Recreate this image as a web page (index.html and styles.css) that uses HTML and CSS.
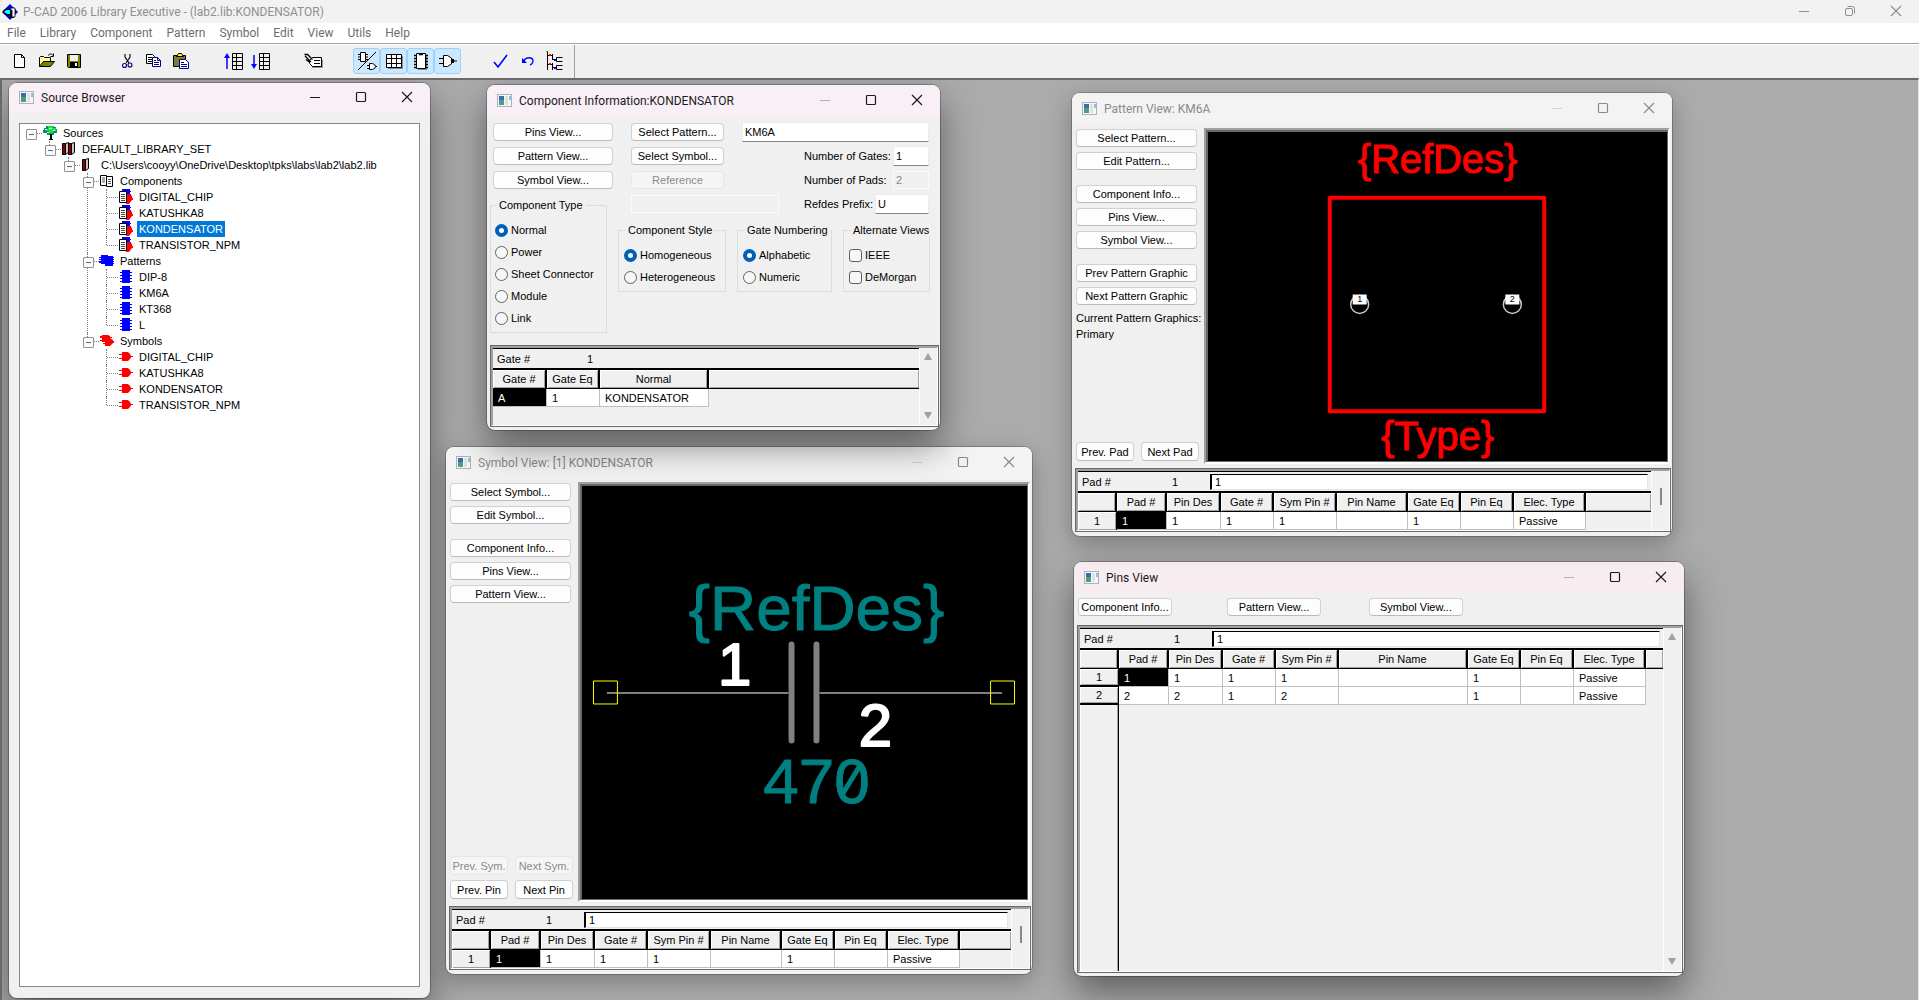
FILE: index.html
```html
<!DOCTYPE html>
<html lang="en">
<head>
<meta charset="utf-8">
<title>P-CAD 2006 Library Executive - (lab2.lib:KONDENSATOR)</title>
<link rel="stylesheet" href="styles.css">
</head>
<body>
<svg class="defs" aria-hidden="true">
  <symbol id="i-min" viewBox="0 0 12 12"><path d="M1 6.5h10" fill="none" stroke="currentColor"/></symbol>
  <symbol id="i-max" viewBox="0 0 12 12"><rect x="1.5" y="1.5" width="9" height="9" rx="1" fill="none" stroke="currentColor" stroke-width="1.2"/></symbol>
  <symbol id="i-restore" viewBox="0 0 12 12"><rect x="1.5" y="3.500" width="7" height="7" rx="1.500" fill="none" stroke="currentColor"/><path d="M3.500 1.500h5a2 2 0 0 1 2 2v5" fill="none" stroke="currentColor"/></symbol>
  <symbol id="i-close" viewBox="0 0 12 12"><path d="M1 1l10 10M11 1L1 11" fill="none" stroke="currentColor" stroke-width="1.200"/></symbol>
  <symbol id="i-app" viewBox="0 0 16 14"><rect x=".5" y=".5" width="14" height="12" fill="#f4f6f7" stroke="#a9b4ba"/><rect x="2" y="2" width="5" height="5" fill="#3a6ea5"/><rect x="2" y="6" width="5" height="5" fill="#4f9c83"/><rect x="8" y="2" width="3" height="9" fill="#dfe3de"/><rect x="12" y="2" width="2" height="4" fill="#8dc0dd"/></symbol>
  <symbol id="t-tree" viewBox="0 0 16 16"><path d="M4 1h8v1h2v2h1v4h-3v2H5V8H1V5h1V3h2z" fill="#0a8a7a"/><path d="M6 1h5v2h3v3h-3v2H7V6H4V4h2z" fill="#19e23a"/><path d="M3 4h2v1H3zM7 3h3v1H7zM5 7h2v1H5zM11 5h2v1h-2z" fill="#d8fbe0"/><path d="M8 9h2v6H8zM7 14h4v1H7z" fill="#000"/></symbol>
  <symbol id="t-books" viewBox="0 0 16 16"><path d="M1.500 2.500h3v11h-3zM7.500 2.500h3v11h-3z" fill="#8b0000" stroke="#000"/><path d="M4.500 2.500l3-1v10l-3 2zM10.500 2.500l3-1v10l-3 2z" fill="#c8c8c8" stroke="#000"/></symbol>
  <symbol id="t-book" viewBox="0 0 16 16"><path d="M2.500 2.500h3v11h-3z" fill="#8b0000" stroke="#000"/><path d="M5.500 2.500l3-1v10l-3 2z" fill="#c8c8c8" stroke="#000"/></symbol>
  <symbol id="t-comps" viewBox="0 0 16 16"><path d="M1.500 2.500h6v10h-6zM7.500 3.500h6v10h-6z" fill="#fff" stroke="#000"/><path d="M3 5h3M3 7h3M3 9h3M9 6.500h3M9 8.500h3M9 10.500h3" stroke="#555"/></symbol>
  <symbol id="t-comp" viewBox="0 0 16 16"><path d="M4 0h8v2h1v1h-1v2h1v1h-1v2H4z" fill="#00f"/><path d="M8 5h4l2 2v2h1v2h-1l-3 4H8z" fill="#f00"/><path d="M1.500 2.500h7v11h-7z" fill="#fff" stroke="#000"/><path d="M3 5.500h4M3 7.500h4M3 9.500h4M3 11.500h4" stroke="#444"/></symbol>
  <symbol id="t-pats" viewBox="0 0 16 16"><path d="M2 2h7v1h5v1h1v1h-1v1h1v1h-1v1h1v1h-1v1h1v1h-1v2H6v-2H2v-1H0v-1h2V9H0V8h2V7H0V6h2V5H0V4h2z" fill="#00f"/></symbol>
  <symbol id="t-pat" viewBox="0 0 16 16"><path d="M4 1h8v2h2v1h-2v2h2v1h-2v2h2v1h-2v2h2v1h-2v1H4v-1H2v-1h2v-2H2V9h2V7H2V6h2V4H2V3h2z" fill="#00f"/></symbol>
  <symbol id="t-syms" viewBox="0 0 16 16"><path d="M1 3h2V2h6l2 1v1h2v1h-2l3 2v1h1v2h-1l-3 3H6v-2H4v-1h2V9H3V8H1V7h2V5H1z" fill="#f00"/></symbol>
  <symbol id="t-sym" viewBox="0 0 16 16"><path d="M1 5h3V3h6l2 2 1 2h2v1h-2l-1 2-2 2H4v-2H1V9h3V6H1z" fill="#f00"/></symbol>
</svg>

<header class="app-title">
  <svg class="app-logo" width="16" height="16" viewBox="0 0 16 16" aria-hidden="true"><path d="M8 0l8 8-8 8-8-8z" fill="#0000e0"/><path d="M3 5h6v2h3v7H8v-3H4L1 9V7z" fill="#000"/><path d="M4 6h4v4H5L2 8z" fill="#0ff"/><path d="M9 4h4v9h-3V6H8z" fill="#fff" stroke="#000" stroke-width=".8"/></svg>
  <h1>P-CAD 2006 Library Executive - (lab2.lib:KONDENSATOR)</h1>
  <div class="win-ctl">
    <button aria-label="Minimize"><svg><use href="#i-min"/></svg></button>
    <button aria-label="Restore"><svg><use href="#i-restore"/></svg></button>
    <button aria-label="Close"><svg><use href="#i-close"/></svg></button>
  </div>
</header>
<nav class="menu">
  <a href="#">File</a><a href="#">Library</a><a href="#">Component</a><a href="#">Pattern</a><a href="#">Symbol</a><a href="#">Edit</a><a href="#">View</a><a href="#">Utils</a><a href="#">Help</a>
</nav>
<div class="toolbar">
  <div class="tools">
    <button aria-label="New"><svg viewBox="0 0 20 20"><path d="M4.500 3.500h7l3 3v10h-10z" fill="#fff" stroke="#000"/><path d="M11.500 3.500v3h3" fill="none" stroke="#000"/></svg></button>
    <button aria-label="Open"><svg viewBox="0 0 20 20"><path d="M2.500 15.500v-9l1-1h3l1 1h6v4" fill="#ffff9a" stroke="#000"/><path d="M2.500 15.500l4-5h11l-4 5z" fill="#808000" stroke="#000"/><path d="M11 4.500c2-2 4-2 5 0M16.500 2.500v3h-3" fill="none" stroke="#000"/></svg></button>
    <button aria-label="Save"><svg viewBox="0 0 20 20"><path d="M3.500 3.500h13v13h-12l-1-1z" fill="#808000" stroke="#000"/><path d="M6 4h8v6H6z" fill="#f0f0f0"/><path d="M6 11h8v5H6z" fill="#000"/><path d="M11 12h2v3h-2z" fill="#fff"/></svg></button>
  </div>
  <div class="tools">
    <button aria-label="Cut"><svg viewBox="0 0 20 20"><path d="M8 3v3l4 6M13 3v3L9 12" fill="none" stroke="#000" stroke-width="1.100"/><circle cx="7.500" cy="14.500" r="2" fill="none" stroke="#000080" stroke-width="1.100"/><circle cx="13" cy="14" r="2" fill="none" stroke="#000080" stroke-width="1.100"/></svg></button>
    <button aria-label="Copy"><svg viewBox="0 0 20 20"><path d="M2.500 3.500h6l2 2v7h-8z" fill="#fff" stroke="#000"/><path d="M4 6.500h4M4 8.500h4M4 10.500h4" stroke="#000"/><path d="M8.500 6.500h5l3 3v6h-8z" fill="#fff" stroke="#000080"/><path d="M13.500 6.500v3h3M10 9.500h2M10 11.500h5M10 13.500h5" fill="none" stroke="#000080"/></svg></button>
    <button aria-label="Paste"><svg viewBox="0 0 20 20"><path d="M2.500 4.500h12v11h-12z" fill="#7d7a3a" stroke="#000"/><path d="M5.500 5.500l2-3h3l2 3z" fill="#ff0" stroke="#000"/><path d="M8.500 8.500h6l3 3v6h-9z" fill="#fff" stroke="#000080"/><path d="M10 11.500h3M10 13.500h6M10 15.500h6" stroke="#000080"/></svg></button>
  </div>
  <div class="tools">
    <button aria-label="Move up"><svg viewBox="0 0 20 20"><path d="M3 4v14" stroke="#00f" stroke-width="1.500"/><path d="M0 7l3-5 3 5z" fill="#00f"/><path d="M8.500 2.500h10v16h-10zM12.500 2.500v16M8.500 6.500h10M8.500 10.500h10M8.500 14.500h10" fill="none" stroke="#000"/></svg></button>
    <button aria-label="Move down"><svg viewBox="0 0 20 20"><path d="M3 4v12" stroke="#00f" stroke-width="1.500"/><path d="M0 13l3 5 3-5z" fill="#00f"/><path d="M8.500 2.500h10v16h-10zM12.500 2.500v16M8.500 6.500h10M8.500 10.500h10M8.500 14.500h10" fill="none" stroke="#000"/></svg></button>
  </div>
  <div class="tools">
    <button aria-label="Rename"><svg viewBox="0 0 20 20"><path d="M8 9h11v8H8z" fill="#999"/><path d="M5.500 9.500l3-3h9v9h-9l-3-3z" fill="#fff" stroke="#000"/><path d="M10 9.500h6M10 12.500h6" stroke="#000"/><path d="M.500 3.500h3l5 5M1 5l6 6M2 8.500l4 3" fill="none" stroke="#000" stroke-width="1.300"/></svg></button>
  </div>
  <div class="tools on">
    <button aria-label="Component information"><svg viewBox="0 0 20 20"><path d="M3.500 1.500h5v9h-5zM1 3.500h2M1 6h2M1 8.500h2M9 3.500h2M9 6h2M9 8.500h2" fill="#fff" stroke="#000"/><path d="M1 19L19 1M10 14.500h3M10 17.500h3M18 15.500h2" stroke="#000"/><path d="M12.500 12.500h3q3 1 3 3t-3 3h-3z" fill="#fff" stroke="#000"/></svg></button>
    <button aria-label="Pins view"><svg viewBox="0 0 20 20"><path d="M4 5h15v13H4z" fill="#888"/><path d="M2.500 3.500h15v13h-15z" fill="#fff" stroke="#000"/><path d="M7.500 3.500v13M12.500 3.500v13M2.500 7.500h15M2.500 12.500h15" stroke="#000"/></svg></button>
    <button aria-label="Pattern view"><svg viewBox="0 0 20 20"><path d="M7 4h9v15H7z" fill="#888"/><path d="M5.500 2.500h9v15h-9z" fill="#fff" stroke="#000"/><path d="M8 3.500h4M3 4.500h2M3 7.500h2M3 10.500h2M3 13.500h2M3 16.500h2M15 4.500h2M15 7.500h2M15 10.500h2M15 13.500h2M15 16.500h2" stroke="#000" stroke-width="1.500"/></svg></button>
    <button aria-label="Symbol view"><svg viewBox="0 0 20 20"><path d="M1 7.500h5M1 12.500h5M15 10h4" stroke="#000"/><path d="M5.500 4.500h4q5 2 5 5.500t-5 5.500h-4z" fill="#fff" stroke="#000"/><path d="M13 8h3v4h-3z" fill="#000"/></svg></button>
  </div>
  <div class="tools">
    <button aria-label="Validate"><svg viewBox="0 0 20 20"><path d="M3 11l4 5L16 4" fill="none" stroke="#00f" stroke-width="1.600"/></svg></button>
    <button aria-label="Undo"><svg viewBox="0 0 20 20"><path d="M5 11c3-6 10-5 10-1 0 2-1 3-3 4" fill="none" stroke="#00f" stroke-width="1.300"/><path d="M4 7v5h5z" fill="#00f"/></svg></button>
    <button aria-label="Source browser"><svg viewBox="0 0 20 20"><path d="M2.500 1v18M2.500 4.500h5M7.500 3v6M7.500 8.500h4M11.500 6.500v4M11.500 6.500h6M11.500 10.500h6M2.500 13.500h5M7.500 12v7M7.500 16.500h4M11.500 14.500v4M11.500 14.500h6M11.500 18.500h6" fill="none" stroke="#000"/><path d="M4 3h2v2H4zM4 12h2v2H4z" fill="#f00"/><path d="M9 8h2v2H9zM9 16h2v2H9z" fill="#00f"/><path d="M1 0h2v1H1z" fill="#0c0"/></svg></button>
  </div>
</div>

<main class="mdi">
  <section class="win w-source active">
    <div class="bar">
      <svg class="ico"><use href="#i-app"/></svg><h2>Source Browser</h2>
      <div class="win-ctl"><button aria-label="Minimize"><svg><use href="#i-min"/></svg></button><button aria-label="Maximize"><svg><use href="#i-max"/></svg></button><button aria-label="Close"><svg><use href="#i-close"/></svg></button></div>
    </div>
    <div class="treebox">
      <ul class="tree">
        <li><div class="row"><i class="exp"></i><svg><use href="#t-tree"/></svg><span>Sources</span></div>
          <ul><li><div class="row"><i class="exp"></i><svg><use href="#t-books"/></svg><span>DEFAULT_LIBRARY_SET</span></div>
            <ul><li><div class="row"><i class="exp"></i><svg><use href="#t-book"/></svg><span>C:\Users\cooyy\OneDrive\Desktop\tpks\labs\lab2\lab2.lib</span></div>
              <ul>
                <li><div class="row"><i class="exp"></i><svg><use href="#t-comps"/></svg><span>Components</span></div>
                  <ul>
                    <li><div class="row"><i></i><svg><use href="#t-comp"/></svg><span>DIGITAL_CHIP</span></div></li>
                    <li><div class="row"><i></i><svg><use href="#t-comp"/></svg><span>KATUSHKA8</span></div></li>
                    <li><div class="row"><i></i><svg><use href="#t-comp"/></svg><span class="sel">KONDENSATOR</span></div></li>
                    <li><div class="row"><i></i><svg><use href="#t-comp"/></svg><span>TRANSISTOR_NPM</span></div></li>
                  </ul></li>
                <li><div class="row"><i class="exp"></i><svg><use href="#t-pats"/></svg><span>Patterns</span></div>
                  <ul>
                    <li><div class="row"><i></i><svg><use href="#t-pat"/></svg><span>DIP-8</span></div></li>
                    <li><div class="row"><i></i><svg><use href="#t-pat"/></svg><span>KM6A</span></div></li>
                    <li><div class="row"><i></i><svg><use href="#t-pat"/></svg><span>KT368</span></div></li>
                    <li><div class="row"><i></i><svg><use href="#t-pat"/></svg><span>L</span></div></li>
                  </ul></li>
                <li><div class="row"><i class="exp"></i><svg><use href="#t-syms"/></svg><span>Symbols</span></div>
                  <ul>
                    <li><div class="row"><i></i><svg><use href="#t-sym"/></svg><span>DIGITAL_CHIP</span></div></li>
                    <li><div class="row"><i></i><svg><use href="#t-sym"/></svg><span>KATUSHKA8</span></div></li>
                    <li><div class="row"><i></i><svg><use href="#t-sym"/></svg><span>KONDENSATOR</span></div></li>
                    <li><div class="row"><i></i><svg><use href="#t-sym"/></svg><span>TRANSISTOR_NPM</span></div></li>
                  </ul></li>
              </ul></li></ul></li></ul></li>
      </ul>
    </div>
  </section>

  <section class="win w-symbol">
    <div class="bar">
      <svg class="ico"><use href="#i-app"/></svg><h2>Symbol View: [1] KONDENSATOR</h2>
      <div class="win-ctl"><button disabled aria-label="Minimize"><svg><use href="#i-min"/></svg></button><button aria-label="Maximize"><svg><use href="#i-max"/></svg></button><button aria-label="Close"><svg><use href="#i-close"/></svg></button></div>
    </div>
    <div class="view">
      <div class="side">
        <div class="stack"><button class="btn">Select Symbol...</button><button class="btn">Edit Symbol...</button></div>
        <div class="stack"><button class="btn">Component Info...</button><button class="btn">Pins View...</button><button class="btn">Pattern View...</button></div>
        <div class="pairs"><button class="btn" disabled>Prev. Sym.</button><button class="btn" disabled>Next Sym.</button><button class="btn">Prev. Pin</button><button class="btn">Next Pin</button></div>
      </div>
      <div class="canvas"><svg viewBox="0 0 446 412">
        <text class="ref" x="235" y="143">{RefDes}</text>
        <text class="ref" x="235" y="317">470</text>
        <path d="M261 308l19-31" stroke="#008080" stroke-width="5"/>
        <text class="pin" x="153" y="198">1</text>
        <text class="pin" x="294" y="260">2</text>
        <path d="M25 206.500h182M238 206.500h183" stroke="#fff"/>
        <path d="M210 158v96M235 158v96" stroke="#808080" stroke-width="6" stroke-linecap="round"/>
        <path d="M11.500 194.500h24v23h-24zM409.500 194.500h24v23h-24z" fill="none" stroke="#ff0"/>
      </svg></div>
    </div>
    <div class="grid"><div class="sunk">
      <div class="sheet">
        <div class="cellbar"><span>Pad #</span><span>1</span><input type="text" value="1" aria-label="Pad number"></div>
        <table>
          <colgroup><col class="c38"><col class="c50"><col class="c54"><col class="c53"><col class="c63"><col class="c71"><col class="c53"><col class="c53"><col class="c72"><col></colgroup>
          <thead><tr><th></th><th>Pad #</th><th>Pin Des</th><th>Gate #</th><th>Sym Pin #</th><th>Pin Name</th><th>Gate Eq</th><th>Pin Eq</th><th>Elec. Type</th><th></th></tr></thead>
          <tbody><tr><th>1</th><td class="cur">1</td><td>1</td><td>1</td><td>1</td><td></td><td>1</td><td></td><td>Passive</td><td></td></tr></tbody>
        </table>
      </div>
      <div class="scroll thumb"></div>
    </div></div>
  </section>

  <section class="win w-info active">
    <div class="bar">
      <svg class="ico"><use href="#i-app"/></svg><h2>Component Information:KONDENSATOR</h2>
      <div class="win-ctl"><button disabled aria-label="Minimize"><svg><use href="#i-min"/></svg></button><button aria-label="Maximize"><svg><use href="#i-max"/></svg></button><button aria-label="Close"><svg><use href="#i-close"/></svg></button></div>
    </div>
    <form class="info">
      <div class="left">
        <div class="goto"><button type="button" class="btn">Pins View...</button><button type="button" class="btn">Pattern View...</button><button type="button" class="btn">Symbol View...</button></div>
        <fieldset><legend>Component Type</legend>
          <label><input type="radio" name="type" checked>Normal</label>
          <label><input type="radio" name="type">Power</label>
          <label><input type="radio" name="type">Sheet Connector</label>
          <label><input type="radio" name="type">Module</label>
          <label><input type="radio" name="type">Link</label>
        </fieldset>
      </div>
      <div class="right">
        <div class="fields">
          <button type="button" class="btn">Select Pattern...</button>
          <input class="wide" type="text" value="KM6A" aria-label="Pattern name">
          <button type="button" class="btn">Select Symbol...</button>
          <div class="field"><label for="gates">Number of Gates:</label><input id="gates" type="text" value="1"></div>
          <button type="button" class="btn" disabled>Reference</button>
          <div class="field"><label for="pads">Number of Pads:</label><input id="pads" type="text" value="2" disabled></div>
          <input class="refname" type="text" value="" disabled aria-label="Reference name">
          <div class="field"><label for="prefix">Refdes Prefix:</label><input id="prefix" class="w54" type="text" value="U"></div>
        </div>
        <div class="sets">
          <fieldset class="s1"><legend>Component Style</legend>
            <label><input type="radio" name="style" checked>Homogeneous</label>
            <label><input type="radio" name="style">Heterogeneous</label>
          </fieldset>
          <fieldset class="s2"><legend>Gate Numbering</legend>
            <label><input type="radio" name="num" checked>Alphabetic</label>
            <label><input type="radio" name="num">Numeric</label>
          </fieldset>
          <fieldset class="s3"><legend>Alternate Views</legend>
            <label><input type="checkbox">IEEE</label>
            <label><input type="checkbox">DeMorgan</label>
          </fieldset>
        </div>
      </div>
    </form>
    <div class="grid"><div class="sunk">
      <div class="sheet">
        <div class="cellbar"><span>Gate #</span><span>1</span></div>
        <table>
          <colgroup><col class="c54"><col class="c53"><col class="c109"><col></colgroup>
          <thead><tr><th>Gate #</th><th>Gate Eq</th><th>Normal</th><th></th></tr></thead>
          <tbody><tr><td class="cur">A</td><td>1</td><td>KONDENSATOR</td><td></td></tr></tbody>
        </table>
      </div>
      <div class="scroll arrows"></div>
    </div></div>
  </section>

  <section class="win w-pins active">
    <div class="bar">
      <svg class="ico"><use href="#i-app"/></svg><h2>Pins View</h2>
      <div class="win-ctl"><button disabled aria-label="Minimize"><svg><use href="#i-min"/></svg></button><button aria-label="Maximize"><svg><use href="#i-max"/></svg></button><button aria-label="Close"><svg><use href="#i-close"/></svg></button></div>
    </div>
    <div class="btnrow"><button class="btn">Component Info...</button><button class="btn">Pattern View...</button><button class="btn">Symbol View...</button></div>
    <div class="grid"><div class="sunk">
      <div class="sheet">
        <div class="cellbar"><span>Pad #</span><span>1</span><input type="text" value="1" aria-label="Pad number"></div>
        <table>
          <colgroup><col class="c38"><col class="c50"><col class="c54"><col class="c53"><col class="c63"><col class="c129"><col class="c53"><col class="c53"><col class="c72"><col></colgroup>
          <thead><tr><th></th><th>Pad #</th><th>Pin Des</th><th>Gate #</th><th>Sym Pin #</th><th>Pin Name</th><th>Gate Eq</th><th>Pin Eq</th><th>Elec. Type</th><th></th></tr></thead>
          <tbody>
            <tr><th>1</th><td class="cur">1</td><td>1</td><td>1</td><td>1</td><td></td><td>1</td><td></td><td>Passive</td><td></td></tr>
            <tr><th>2</th><td>2</td><td>2</td><td>1</td><td>2</td><td></td><td>1</td><td></td><td>Passive</td><td></td></tr>
          </tbody>
        </table>
        <div class="gutter"></div>
      </div>
      <div class="scroll arrows"></div>
    </div></div>
  </section>

  <section class="win w-pattern">
    <div class="bar">
      <svg class="ico"><use href="#i-app"/></svg><h2>Pattern View: KM6A</h2>
      <div class="win-ctl"><button disabled aria-label="Minimize"><svg><use href="#i-min"/></svg></button><button aria-label="Maximize"><svg><use href="#i-max"/></svg></button><button aria-label="Close"><svg><use href="#i-close"/></svg></button></div>
    </div>
    <div class="view">
      <div class="side">
        <div class="stack"><button class="btn">Select Pattern...</button><button class="btn">Edit Pattern...</button></div>
        <div class="stack"><button class="btn">Component Info...</button><button class="btn">Pins View...</button><button class="btn">Symbol View...</button></div>
        <div class="stack"><button class="btn">Prev Pattern Graphic</button><button class="btn">Next Pattern Graphic</button><p>Current Pattern Graphics:<br>Primary</p></div>
        <div class="pairs"><button class="btn">Prev. Pad</button><button class="btn">Next Pad</button></div>
      </div>
      <div class="canvas"><svg viewBox="0 0 460 328">
        <text class="red" x="230" y="40">{RefDes}</text>
        <text class="red" x="230" y="318">{Type}</text>
        <rect x="122" y="65" width="215" height="214" fill="none" stroke="#f00" stroke-width="4" stroke-linejoin="round"/>
        <g fill="none" stroke="#c8c8c8" stroke-width="1.500"><circle cx="152" cy="172" r="9"/><circle cx="305" cy="172" r="9"/></g>
        <path d="M145 162h14v10h-14zM298 162h14v10h-14z" fill="#fff"/>
        <text class="padno" x="152" y="170">1</text><text class="padno" x="305" y="170">2</text>
      </svg></div>
    </div>
    <div class="grid"><div class="sunk">
      <div class="sheet">
        <div class="cellbar"><span>Pad #</span><span>1</span><input type="text" value="1" aria-label="Pad number"></div>
        <table>
          <colgroup><col class="c38"><col class="c50"><col class="c54"><col class="c53"><col class="c63"><col class="c71"><col class="c53"><col class="c53"><col class="c72"><col></colgroup>
          <thead><tr><th></th><th>Pad #</th><th>Pin Des</th><th>Gate #</th><th>Sym Pin #</th><th>Pin Name</th><th>Gate Eq</th><th>Pin Eq</th><th>Elec. Type</th><th></th></tr></thead>
          <tbody><tr><th>1</th><td class="cur">1</td><td>1</td><td>1</td><td>1</td><td></td><td>1</td><td></td><td>Passive</td><td></td></tr></tbody>
        </table>
      </div>
      <div class="scroll thumb"></div>
    </div></div>
  </section>
</main>
</body>
</html>
```
FILE: styles.css
```css
* { box-sizing: border-box; }
body {
  margin: 0; height: 100vh; display: flex; flex-direction: column; overflow: hidden;
  background: #f0f0f0; color: #000;
  font: 11px/16px "Liberation Sans", Arial, sans-serif;
}
button, input { font: inherit; color: inherit; }
h1, h2, p, ul { margin: 0; padding: 0; font-weight: 400; }
ul { list-style: none; }
.defs { display: none; }

/* application frame */
.app-title {
  flex: none; height: 23px; display: flex; align-items: center;
  background: #f2f2f2; color: #8f8f8f; padding-left: 2px;
}
.app-title h1 { flex: 1; margin-left: 5px; font: 12px/20px Roboto, sans-serif; }
.win-ctl { display: flex; align-self: stretch; color: inherit; }
.win-ctl button {
  width: 46px; border: 0; padding: 0 0 2px; background: none;
  display: flex; align-items: center; justify-content: center;
}
.win-ctl button:disabled { opacity: .3; }
.win-ctl svg { width: 12px; height: 12px; }
.menu {
  flex: none; height: 22px; background: #fff; display: flex;
  border-bottom: 1px solid #fff; box-shadow: inset 0 -1px #a0a0a0;
}
.menu a {
  padding: 0 7px; color: #6d6d6d; text-decoration: none;
  font: 12px/20px Roboto, sans-serif;
}
.toolbar {
  flex: none; height: 33px; display: flex; gap: 26px; align-items: center;
  padding: 0 6px 2px; background: #f0f0f0; border-right: 1px solid #a0a0a0;
  width: max-content;
}
.tools { display: flex; }
.tools button {
  width: 27px; height: 26px; padding: 0; border: 0; background: none;
  display: flex; align-items: center; justify-content: center;
}
.tools svg { width: 20px; height: 20px; }
.tools.on button { background: #cce8ff; border: 1px solid #99d1ff; border-radius: 3px; }

.mdi {
  flex: 1; position: relative; overflow: hidden; background: #ababab;
  border: solid #696969; border-width: 2px 1px 0 2px; border-right-color: #e3e3e3;
}

/* child windows, free on the desktop */
.win {
  position: absolute; display: flex; flex-direction: column;
  background: #f0f0f0; border-radius: 8px; padding: 0 1px 3px 3px;
  box-shadow: 0 0 0 1px rgba(0, 0, 0, .22), 0 8px 24px rgba(0, 0, 0, .28);
}
.win.active { box-shadow: 0 0 0 1px rgba(0, 0, 0, .25), 0 16px 36px rgba(0, 0, 0, .45); }
.w-source { left: 7px; top: 3px; width: 421px; height: 915px; }
.w-info { left: 485px; top: 5px; width: 453px; height: 345px; }
.w-symbol { left: 444px; top: 367px; width: 586px; height: 527px; padding-bottom: 4px; }
.w-pattern { left: 1070px; top: 13px; width: 600px; height: 443px; padding-bottom: 4px; }
.w-pins { left: 1072px; top: 482px; width: 610px; height: 414px; }
.bar {
  flex: none; height: 32px; margin: 0 -1px 0 -3px; padding-left: 10px;
  display: flex; align-items: center; background: #f3f3f3; color: #8a8a8a;
  border-radius: 8px 8px 0 0;
}
.active .bar { background: #f9eff7; color: #1b1b1b; }
.w-pins .bar { background: #f7ecef; }
.bar h2 { flex: 1; margin-left: 6px; font: 12px/20px Roboto, sans-serif; }
.ico { width: 16px; height: 14px; }

/* shared controls */
.btn {
  height: 18px; padding: 0; border: 1px solid #d0d0d0; border-bottom-color: #bababa;
  border-radius: 4px; background: #fdfdfd; line-height: 16px; white-space: nowrap; text-align: center;
}
.btn:disabled { background: #f5f5f5; border-color: #e6e6e6; color: #8a8a8a; }
input[type="text"] {
  height: 20px; padding: 0 2px; border: 1px solid #ececec; border-bottom-color: #868686;
  background: #fff; border-radius: 0; min-width: 0;
}
input[type="text"]:disabled { background: #f0f0f0; border-color: #fafafa; color: #8a8a8a; height: 18px; align-self: center; }
input[type="radio"], input[type="checkbox"] {
  appearance: none; width: 13px; height: 13px; margin: 0 3px 0 0; flex: none;
  border: 1px solid #626262; border-radius: 50%; background: #f7f7f7;
}
input[type="checkbox"] { border-radius: 3px; }
input[type="radio"]:checked { border: 4px solid #005fb8; background: #fff; }
fieldset { margin: 0; padding: 7px 0 3px 4px; border: 1px solid #dcdcdc; min-width: 0; }
fieldset legend { margin-left: 2px; padding: 0 3px 0 2px; line-height: 14px; white-space: nowrap; }
fieldset label { display: flex; align-items: center; height: 22px; }

/* source tree */
.w-source .bar { height: 30px; }
.treebox { flex: 1; margin: 10px 9px 8px 7px; padding: 1px 0 0 6px; border: 1px solid #828790; background: #fff; }
.tree ul { margin-left: 19px; }
.tree li { position: relative; }
.tree li::before {
  content: ""; position: absolute; left: 4px; top: 0; bottom: 0; border-left: 1px dotted #808080;
}
.tree li:last-child::before { bottom: auto; height: 8px; }
.tree > li::before { display: none; }
.row { display: flex; align-items: center; height: 16px; }
.row svg { width: 16px; height: 16px; }
.row i { width: 16px; height: 16px; position: relative; flex: none; }
.row i::before { content: ""; position: absolute; left: 5px; top: 8px; width: 11px; border-top: 1px dotted #808080; }
.row .exp::after {
  content: ""; position: absolute; left: 0; top: 4px; width: 9px; height: 9px;
  border: 1px solid #919191; border-radius: 1px;
  background: linear-gradient(#4b63a7, #4b63a7) center / 5px 1px no-repeat #fafafa;
}
.row span { margin-left: 3px; padding: 0 2px; white-space: nowrap; }
.row .sel { background: #0078d7; color: #fff; }

/* component information form */
.info {
  display: grid; grid-template-columns: 123px minmax(0, 1fr); column-gap: 5px;
  padding: 5px 9px 9px 0; flex: 1; align-items: start;
}
.goto { display: grid; gap: 6px; padding: 1px 0 9px 3px; }
.left fieldset { width: 117px; }
.fields {
  display: grid; grid-template-columns: 93px 18px 37px 25px minmax(0, 1fr); grid-auto-rows: 20px;
  row-gap: 4px; margin: 0 1px 0 13px; padding-bottom: 9px;
}
.fields .btn { grid-column: 1; align-self: center; }
.wide { grid-column: 3 / -1; width: 100%; }
.refname { grid-column: 1 / 4; }
.field { grid-column: 5; display: flex; align-items: center; justify-content: space-between; white-space: nowrap; }
.field input { width: 36px; }
.field .w54 { width: 54px; }
.sets { display: flex; gap: 11px; }
.sets fieldset { padding-left: 5px; }
.s1 { width: 108px; }
.s2 { width: 95px; }
.s3 { flex: 1; }

/* symbol and pattern views */
.view { flex: 1; min-height: 0; display: flex; gap: 5px; padding: 3px 1px 4px; }
.side { width: 123px; display: flex; flex-direction: column; gap: 15px; }
.stack { display: flex; flex-direction: column; gap: 5px; margin-right: 2px; }
.stack:first-child { padding-top: 1px; }
.stack p { white-space: nowrap; }
.pairs { margin-top: auto; display: grid; grid-template-columns: 1fr 1fr; gap: 5px 7px; padding-bottom: 3px; }
.pairs .btn { height: 19px; }
.canvas { flex: 1; min-width: 0; border: 2px solid; border-color: #a0a0a0 #fff #fff #a0a0a0; }
.canvas svg {
  display: block; width: 100%; height: 100%; background: #000;
  border: solid #696969; border-width: 2px 1px 1px 2px;
}
.canvas text { text-anchor: middle; font-family: "Liberation Sans", Arial, sans-serif; stroke-linejoin: round; }
.ref { fill: #008080; stroke: #008080; font-size: 64px; }
.pin { fill: #fff; stroke: #fff; font-size: 60px; stroke-width: 2px; }
.red { fill: #f00; stroke: #f00; font-size: 40px; }
.padno { fill: #000; font-size: 9px; }

/* spreadsheets */
.grid { flex: none; border: 1px solid #696969; }
.sunk { height: 100%; display: flex; border: solid; border-color: #a0a0a0 #fff #fff #a0a0a0; border-width: 2px 1px 1px 2px; }
.sheet { flex: 1; min-width: 0; border-top: 1px solid #000; display: flex; flex-direction: column; }
.cellbar { height: 19px; display: flex; align-items: center; padding: 0 3px 0 4px; }
.cellbar span { width: 90px; }
.cellbar span + span { width: 38px; }
.cellbar input[type="text"] {
  flex: 1; height: 16px; padding: 0 3px; line-height: 14px;
  border-color: #000 #e3e3e3 #e3e3e3 #000; border-width: 1px 1px 1px 2px;
}
table { width: 100%; table-layout: fixed; border-collapse: separate; border-spacing: 0; }
th, td { height: 18px; padding: 0; line-height: 16px; font-weight: 400; white-space: nowrap; overflow: hidden; }
thead th {
  height: 21px; border: solid #000; border-width: 2px 2px 1px 0;
  box-shadow: inset 1px 1px #fff, inset -1px -1px #a0a0a0;
}
thead th:last-child { border-right: 0; }
td { padding-left: 5px; background: #fff; border: solid #c0c0c0; border-width: 0 1px 1px 0; }
td:last-child { background: none; border: 0; }
td.cur { background: #000; color: #fff; }
tbody th { border-right: 1px solid #000; box-shadow: inset 1px 1px #fff, inset -1px -1px #a0a0a0; }
.scroll { width: 18px; border-left: 1px solid #fff; display: flex; flex-direction: column; align-items: center; }
.thumb::before { content: ""; width: 2px; height: 17px; margin-top: 17px; background: #868686; }
.arrows { justify-content: space-between; padding: 5px 2px 6px 0; }
.arrows::before, .arrows::after { content: ""; border: 4px solid transparent; border-top: 0; border-bottom: 7px solid #a0a0a0; }
.arrows::after { border-bottom: 0; border-top: 7px solid #a0a0a0; }
.w-info .grid { height: 82px; }
.w-pins .grid { flex: 1; }
.w-pins tbody th { border-bottom: 2px solid #000; }
.gutter { flex: 1; width: 39px; border-right: 1px solid #000; box-shadow: inset 1px 0 #fff, inset -1px 0 #a0a0a0; }
.btnrow { display: grid; grid-template-columns: 149px 142px 94px; padding: 4px 0 9px 1px; }
.btnrow .btn { width: 94px; }
.c38 { width: 39px; } .c50 { width: 50px; } .c53 { width: 53px; } .c54 { width: 54px; }
.c63 { width: 63px; } .c71 { width: 71px; } .c72 { width: 72px; } .c109 { width: 109px; } .c129 { width: 129px; }
```
